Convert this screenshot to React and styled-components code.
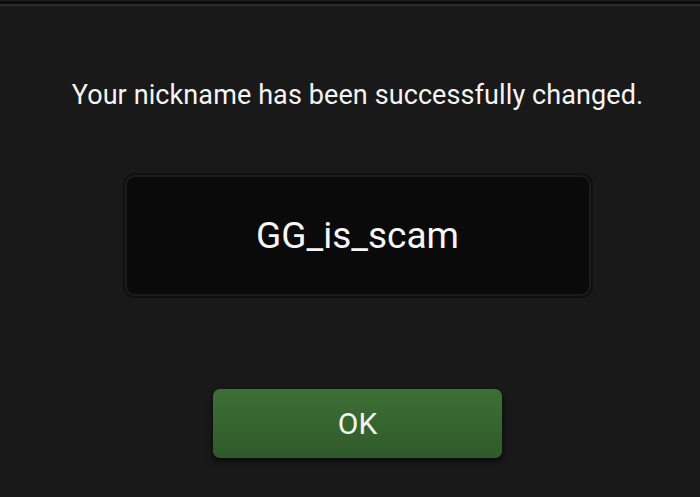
import React from "react";
import styled, { createGlobalStyle } from "styled-components";

const GlobalStyle = createGlobalStyle`
  html, body {
    margin: 0;
    padding: 0;
    background: #191919;
  }
  body {
    font-family: Roboto, "Liberation Sans", sans-serif;
  }
`;

const Screen = styled.div`
  width: 700px;
  height: 497px;
  background: #191919;
  display: flex;
  flex-direction: column;
  overflow: hidden;
`;

const TopEdge = styled.div`
  height: 6px;
  flex-shrink: 0;
  background: linear-gradient(
    to bottom,
    #1e1e1e 0px,
    #1e1e1e 1px,
    #0c0c0c 1px,
    #0c0c0c 4px,
    #2c2c2c 4px,
    #2c2c2c 6px
  );
`;

const Dialog = styled.div`
  flex: 1;
  display: flex;
  flex-direction: column;
  align-items: center;
  padding-left: 15px;
`;

const Message = styled.p`
  margin: 69px 0 0;
  font-size: 27px;
  letter-spacing: 0.1px;
  line-height: 40px;
  color: #f4f4f4;
  text-align: center;
  white-space: nowrap;
`;

const NameBox = styled.div`
  margin-top: 60px;
  width: 466px;
  height: 121px;
  box-sizing: border-box;
  border: 2px solid #1c1c1c;
  border-radius: 10px;
  background: #0a0a0a;
  box-shadow: 0 0 0 2px #101010;
  display: flex;
  align-items: center;
  justify-content: center;
  color: #f6f6f6;
  font-size: 37px;
`;

const OkButton = styled.button`
  margin-top: 93px;
  width: 289px;
  height: 69px;
  border: none;
  border-radius: 7px;
  background: linear-gradient(to bottom, #3d7035, #2f5a2a);
  box-shadow: 0 3px 6px rgba(0, 0, 0, 0.7);
  color: #f2f2f2;
  font-family: Roboto, "Liberation Sans", sans-serif;
  font-size: 30px;
  cursor: pointer;
`;

const App = () => {
  return (
    <>
      <GlobalStyle />
      <Screen>
        <TopEdge />
        <Dialog>
          <Message>Your nickname has been successfully changed.</Message>
          <NameBox>GG_is_scam</NameBox>
          <OkButton>OK</OkButton>
        </Dialog>
      </Screen>
    </>
  );
};

export default App;
